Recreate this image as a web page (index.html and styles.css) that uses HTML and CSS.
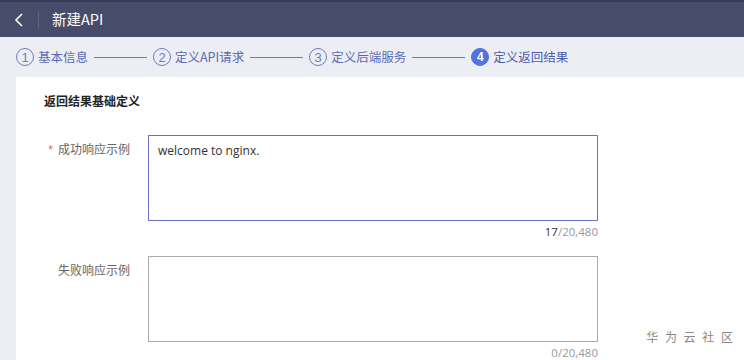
FILE: index.html
```html
<!DOCTYPE html>
<html lang="zh">
<head>
<meta charset="utf-8">
<link rel="stylesheet" href="styles.css">
</head>
<body>
<div class="topbar">
  <span class="back"><svg width="10" height="14" viewBox="0 0 10 14"><path d="M8 1 L2 7 L8 13" fill="none" stroke="#fff" stroke-width="1.6"/></svg></span>
  <span class="sep"></span>
  <span class="title">新建API</span>
</div>
<div class="steps">
  <div class="step"><span class="num">1</span><span class="label">基本信息</span></div>
  <span class="line"></span>
  <div class="step"><span class="num">2</span><span class="label">定义API请求</span></div>
  <span class="line"></span>
  <div class="step"><span class="num">3</span><span class="label">定义后端服务</span></div>
  <span class="line"></span>
  <div class="step active"><span class="num">4</span><span class="label">定义返回结果</span></div>
</div>
<div class="panel">
  <div class="section-title">返回结果基础定义</div>
  <div class="row">
    <div class="field-label"><span class="req">*</span>成功响应示例</div>
    <div class="field">
      <div class="textarea focus">welcome to nginx.</div>
      <div class="count"><span class="cur">17</span>/20,480</div>
    </div>
  </div>
  <div class="row second">
    <div class="field-label">失败响应示例</div>
    <div class="field">
      <div class="textarea"></div>
      <div class="count"><span class="cur0">0</span>/20,480</div>
    </div>
  </div>
  <div class="watermark">华 为 云 社 区</div>
</div>
</body>
</html>
```
FILE: styles.css
```css
* { box-sizing: border-box; }
html, body { margin: 0; padding: 0; }
body {
  width: 744px; height: 360px; overflow: hidden;
  background: #edeef3;
  font-family: "Noto Sans CJK SC", "Noto Sans", sans-serif;
  font-size: 12px;
  color: #333;
}
.topbar {
  height: 37px;
  background: #474c6b;
  border-top: 2px solid #363a52;
  display: flex; align-items: center;
  padding-left: 14px;
}
.back { display: flex; width: 12px; height: 14px; align-items: center; }
.sep { width: 1px; height: 18px; background: #5f6384; margin-left: 12px; }
.title { color: #fff; font-size: 14.5px; margin-left: 13px; line-height: 1; }
.steps {
  height: 40px;
  display: flex; align-items: center;
  padding-left: 16px;
  color: #5b6bb5;
}
.step { display: flex; align-items: center; }
.num {
  width: 18px; height: 18px; border-radius: 50%;
  border: 1px solid #6d7bc4;
  display: flex; align-items: center; justify-content: center;
  font-family: "Liberation Sans", sans-serif; font-size: 13px;
  color: #6d7bc4;
}
.label { margin-left: 4px; font-size: 12.5px; line-height: 1; }
.step.active .num { background: #5272de; border-color: #5272de; color: #fff; font-weight: bold; font-size: 12px; }
.step.active .label { color: #4e5ba8; }
.line { width: 53px; height: 1px; background: #6d7bc4; margin: 0 6px; }
.panel {
  margin-left: 16px;
  background: #fff;
  height: 283px;
  position: relative;
  padding: 15px 0 0 28px;
}
.section-title { font-weight: bold; font-size: 12px; color: #252525; line-height: 17px; }
.row { display: flex; margin-top: 26px; }
.row.second { margin-top: 16px; }
.field-label {
  width: 104px; padding-right: 18px; text-align: right;
  color: #666; line-height: 17px; padding-top: 5px;
}
.req { color: #e0615a; margin-right: 5px; font-family: "Liberation Sans", sans-serif; }
.field { width: 450px; }
.textarea {
  height: 86px;
  border: 1px solid #aaaaaa;
  padding: 6px 9px;
  font-family: "Open Sans", "Noto Sans", sans-serif;
  font-size: 12px; color: #333;
  line-height: 17px;
}
.textarea.focus { border-color: #6c72c2; }
.count {
  text-align: right; color: #999; line-height: 16px; margin-top: 3px;
  font-family: "Open Sans", sans-serif; font-size: 11.5px;
}
.count .cur { color: #333; }
.watermark {
  position: absolute; right: 9px; bottom: 15px;
  color: #888; font-size: 12px; letter-spacing: 2px;
}
```
